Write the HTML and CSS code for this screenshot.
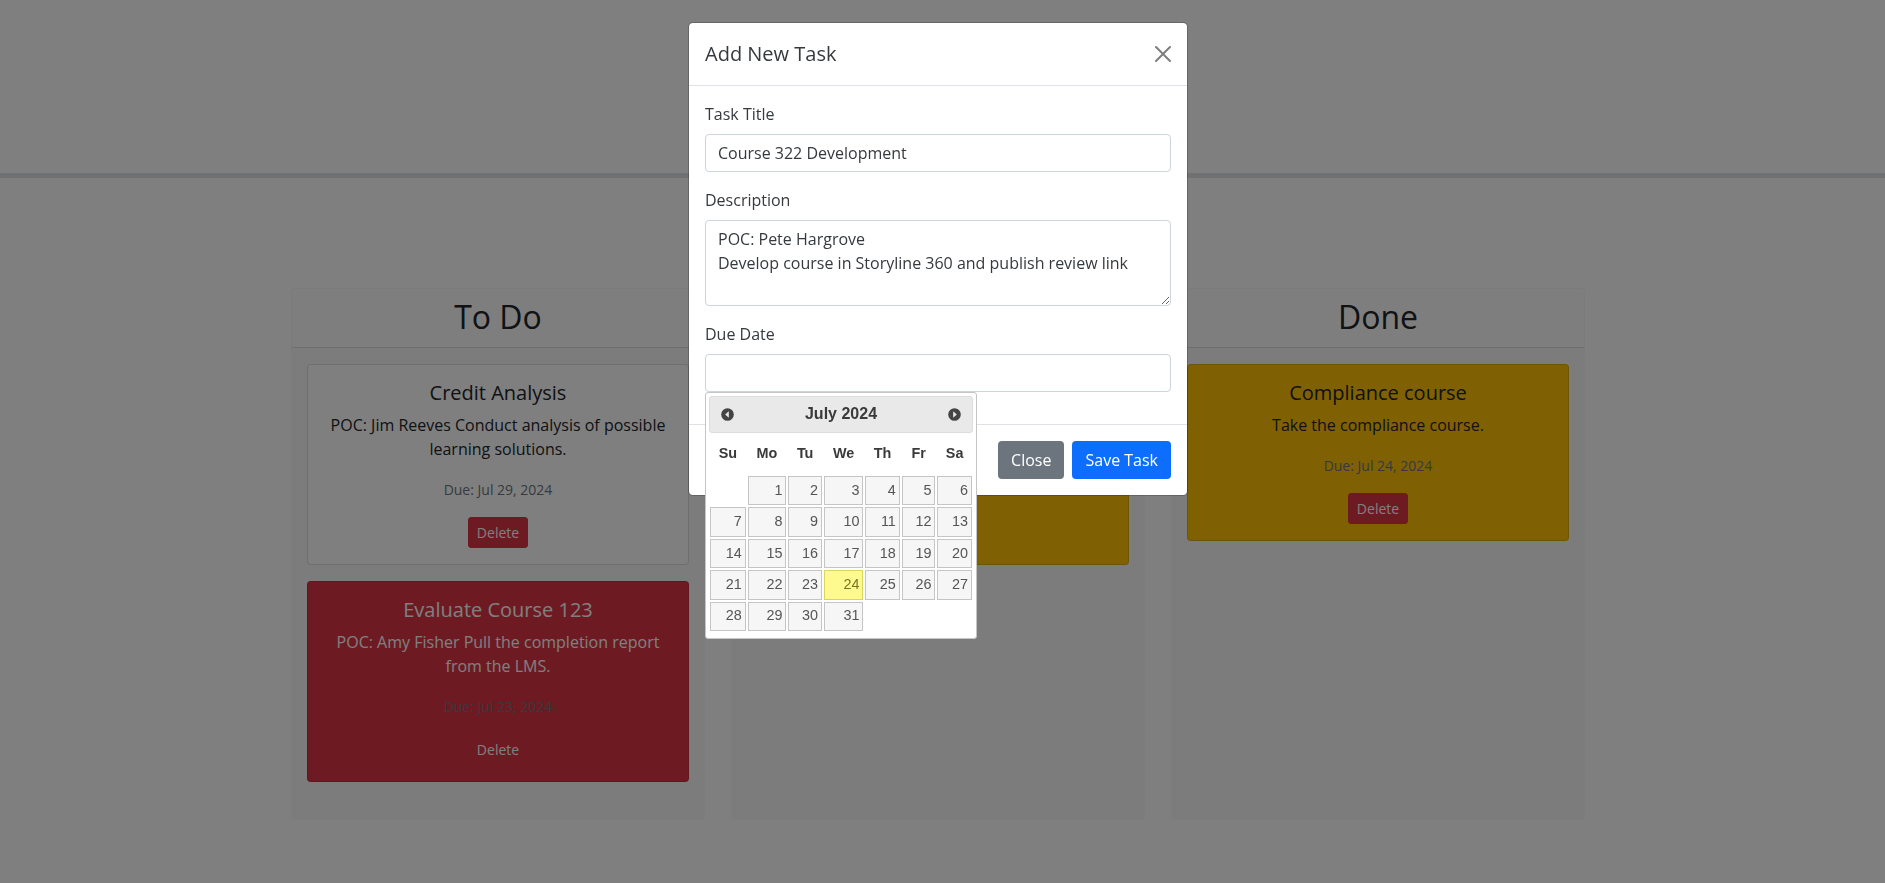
FILE: index.html

```html
<!DOCTYPE html>
<html lang="en">
<head>
  <meta charset="UTF-8" />
  <meta name="viewport" content="width=device-width, initial-scale=1.0" />
  <title>Task Board</title>
  <link rel="stylesheet" href="styles.css">
</head>
<body>
  <header class="page-header"></header>

  <main class="board">
    <section class="column">
      <h2 class="column-title">To Do</h2>
      <div class="column-body">
        <article class="task">
          <h5>Credit Analysis</h5>
          <p>POC: Jim Reeves Conduct analysis of possible learning solutions.</p>
          <p><small class="muted">Due: Jul 29, 2024</small></p>
          <button class="btn-delete" type="button">Delete</button>
        </article>
        <article class="task task-red">
          <h5>Evaluate Course 123</h5>
          <p>POC: Amy Fisher Pull the completion report from the LMS.</p>
          <p><small class="muted">Due: Jul 23, 2024</small></p>
          <button class="btn-delete" type="button">Delete</button>
        </article>
      </div>
    </section>

    <section class="column">
      <h2 class="column-title">In Progress</h2>
      <div class="column-body">
        <!-- text of this card is behind the modal -->
        <article class="task task-yellow task-covered"></article>
      </div>
    </section>

    <section class="column">
      <h2 class="column-title">Done</h2>
      <div class="column-body">
        <article class="task task-yellow">
          <h5>Compliance course</h5>
          <p>Take the compliance course.</p>
          <p><small class="muted">Due: Jul 24, 2024</small></p>
          <button class="btn-delete" type="button">Delete</button>
        </article>
      </div>
    </section>
  </main>

  <div class="backdrop"></div>

  <div class="modal-wrap">
    <form class="modal">
      <div class="modal-header">
        <h5>Add New Task</h5>
        <button class="btn-close" type="button" aria-label="Close">
          <svg viewBox="0 0 16 16" width="16" height="16"><path d="M.293.293a1 1 0 011.414 0L8 6.586 14.293.293a1 1 0 111.414 1.414L9.414 8l6.293 6.293a1 1 0 01-1.414 1.414L8 9.414l-6.293 6.293a1 1 0 01-1.414-1.414L6.586 8 .293 1.707a1 1 0 010-1.414z"/></svg>
        </button>
      </div>

      <div class="modal-body">
        <div class="field">
          <label for="title">Task Title</label>
          <input type="text" id="title" value="Course 322 Development" />
        </div>
        <div class="field">
          <label for="description">Description</label>
          <textarea id="description" rows="3">POC: Pete Hargrove
Develop course in Storyline 360 and publish review link</textarea>
        </div>
        <div class="field date-field">
          <label for="due">Due Date</label>
          <input type="text" id="due" />

          <div class="datepicker">
            <div class="dp-header">
              <svg viewBox="0 0 13 13" width="13" height="13"><circle cx="6.5" cy="6.5" r="6.3"/><path class="dp-arrow" d="M7.8 3.2v6.6L4.2 6.5z"/></svg>
              <span class="dp-title">July 2024</span>
              <svg viewBox="0 0 13 13" width="13" height="13"><circle cx="6.5" cy="6.5" r="6.3"/><path class="dp-arrow" d="M5.2 3.2v6.6l3.6-3.3z"/></svg>
            </div>
            <table class="dp-table">
              <thead>
                <tr><th>Su</th><th>Mo</th><th>Tu</th><th>We</th><th>Th</th><th>Fr</th><th>Sa</th></tr>
              </thead>
              <tbody>
                <tr><td></td><td><a>1</a></td><td><a>2</a></td><td><a>3</a></td><td><a>4</a></td><td><a>5</a></td><td><a>6</a></td></tr>
                <tr><td><a>7</a></td><td><a>8</a></td><td><a>9</a></td><td><a>10</a></td><td><a>11</a></td><td><a>12</a></td><td><a>13</a></td></tr>
                <tr><td><a>14</a></td><td><a>15</a></td><td><a>16</a></td><td><a>17</a></td><td><a>18</a></td><td><a>19</a></td><td><a>20</a></td></tr>
                <tr><td><a>21</a></td><td><a>22</a></td><td><a>23</a></td><td><a class="today">24</a></td><td><a>25</a></td><td><a>26</a></td><td><a>27</a></td></tr>
                <tr><td><a>28</a></td><td><a>29</a></td><td><a>30</a></td><td><a>31</a></td><td></td><td></td><td></td></tr>
              </tbody>
            </table>
          </div>
        </div>
      </div>

      <div class="modal-footer">
        <button class="btn btn-grey" type="button">Close</button>
        <button class="btn btn-blue" type="submit">Save Task</button>
      </div>
    </form>
  </div>
</body>
</html>
```

FILE: styles.css

```css
* { box-sizing: border-box; }

body {
  margin: 0;
  background: #fff;
  color: #212529;
  font-family: "Open Sans", sans-serif;
  font-size: 16px;
  line-height: 1.5;
  overflow: hidden;
}

.page-header {
  height: 178px;
  border-bottom: 5px solid #dee2e6;
}

/* board */
.board {
  display: grid;
  grid-template-columns: repeat(3, 414px);
  gap: 26px;
  width: 1303px;
  margin: 110px auto 0;
  padding-right: 9px;
}

.column {
  height: 532px;
  background: #f8f9fa;
  border-radius: 4px;
}

.column-title {
  margin: 0;
  padding: 9px 16px 10.6px;
  background: #fcfcfd;
  border: 1px solid #f6f6f6;
  border-bottom: 1px solid rgba(0, 0, 0, 0.125);
  border-radius: 4px 4px 0 0;
  font-size: 32px;
  font-weight: 400;
  line-height: 1.2;
  text-align: center;
}

.column-body { padding: 16px; }

.task {
  margin-bottom: 16px;
  padding: 16px;
  background: #fff;
  border: 1px solid rgba(0, 0, 0, 0.125);
  border-radius: 4px;
  text-align: center;
}

.task h5 {
  margin: 0 0 8px;
  font-size: 20px;
  font-weight: 400;
  line-height: 1.2;
}

.task p { margin: 0 0 16px; }
.task small { font-size: 14px; }
.muted { color: #6c757d; }

.task-red { background: #dc3545; color: #fff; }
.task-yellow { background: #ffc107; }
.task-covered { height: 201px; }

.btn-delete {
  padding: 4px 8px;
  background: #dc3545;
  color: #fff;
  border: 1px solid #dc3545;
  border-radius: 3px;
  font: inherit;
  font-size: 14px;
  line-height: 21px;
}

/* modal */
.backdrop {
  position: fixed;
  inset: 0;
  background: rgba(0, 0, 0, 0.5);
}

.modal-wrap {
  position: fixed;
  inset: 0;
  display: flex;
  justify-content: center;
  align-items: flex-start;
  padding: 22px 9px 0 0;
}

.modal {
  width: 500px;
  background: #fff;
  color: #363a3e;
  border: 1px solid rgba(0, 0, 0, 0.2);
  border-radius: 5px;
  background-clip: padding-box;
}

.modal-header {
  display: flex;
  align-items: center;
  justify-content: space-between;
  padding: 16px;
  border-bottom: 1px solid #dee2e6;
}

.modal-header h5 {
  margin: 0;
  font-size: 20px;
  font-weight: 400;
  line-height: 1.5;
}

.btn-close {
  display: flex;
  margin: -8px;
  padding: 8px;
  background: none;
  border: 0;
}

.btn-close svg { opacity: 0.5; }

.modal-body { padding: 16px; }

.field { margin-bottom: 16px; }

.field label {
  display: block;
  margin-bottom: 8px;
}

.field input, .field textarea {
  display: block;
  width: 100%;
  padding: 6px 12px;
  color: #363a3e;
  background: #fff;
  border: 1px solid #ced4da;
  border-radius: 4px;
  font: inherit;
}

.modal-footer {
  display: flex;
  justify-content: flex-end;
  gap: 8px;
  padding: 16px;
  border-top: 1px solid #dee2e6;
}

.btn {
  padding: 6px 12px;
  color: #fff;
  border: 1px solid transparent;
  border-radius: 4px;
  font: inherit;
}

.btn-grey { background: #6c757d; }
.btn-blue { background: #0d6efd; }

/* date picker, sits over the modal */
.date-field { position: relative; }

.datepicker {
  position: absolute;
  top: 100%;
  left: 0;
  width: 272px;
  padding: 3.2px 3.2px 0;
  background: #fff;
  color: #3a3a3a;
  border: 1px solid #c5c5c5;
  border-radius: 3px;
  font-family: "Liberation Sans", Arial, sans-serif;
}

.dp-header {
  display: flex;
  align-items: center;
  justify-content: space-between;
  padding: 3.2px 11px;
  background: #e9e9e9;
  border: 1px solid #ddd;
  border-radius: 3px;
}

.dp-header svg { fill: #444; }
.dp-header .dp-arrow { fill: #e9e9e9; }

.dp-title {
  font-weight: bold;
  line-height: 1.8;
}

.dp-table {
  width: 100%;
  margin: 0 0 0.4em;
  border-collapse: collapse;
  font-size: 0.9em;
}

.dp-table th {
  padding: 0.7em 0.3em;
  text-align: center;
}

.dp-table td { padding: 1px; }

.dp-table a {
  display: block;
  padding: 0.2em;
  text-align: right;
  color: #555;
  background: #f6f6f6;
  border: 1px solid #c5c5c5;
}

.dp-table a.today {
  color: #777620;
  background: #fffa90;
  border-color: #dad55e;
}
```
